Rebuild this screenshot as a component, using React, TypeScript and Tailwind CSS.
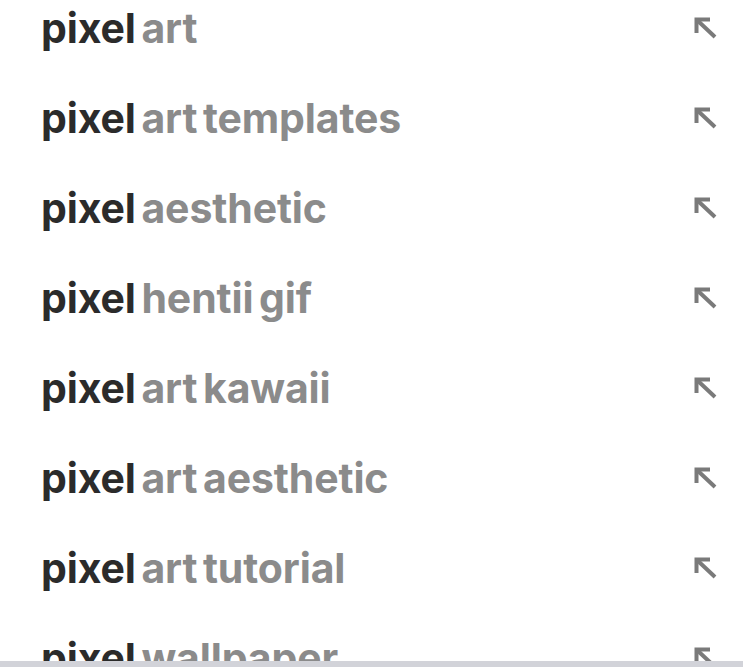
import { FC } from 'react'

const items: string[] = [
    'art',
    'art templates',
    'aesthetic',
    'hentii gif',
    'art kawaii',
    'art aesthetic',
    'art tutorial',
    'wallpaper',
];

const ArrowIcon: FC = () => (
    <svg width="24" height="22" viewBox="0 0 24 22" fill="none" className="text-[#7a7a7a]">
        <path d="M2.5 16V2.5H16" stroke="currentColor" strokeWidth="4" strokeLinecap="butt" strokeLinejoin="miter" />
        <path d="M3 3L21 20" stroke="currentColor" strokeWidth="4" />
    </svg>
);

const App: FC = () => {
    return (
        <div className="relative h-[667px] w-full overflow-hidden bg-white" style={{ fontFamily: 'Inter, "Liberation Sans", sans-serif' }}>
            <div className="flex flex-col mt-[-17px]">
                {items.map((item, i) => (
                    <div key={i} className="flex h-[90px] items-center justify-between pl-[41px] pr-[25px]">
                        <p className="text-[41px] leading-none font-bold tracking-[-0.003em] [word-spacing:-4px] whitespace-nowrap">
                            <span className="text-[#2b2b2b]">pixel </span>
                            <span className="text-[#8b8b8b]">{item}</span>
                        </p>
                        <ArrowIcon />
                    </div>
                ))}
            </div>
            <div className="absolute bottom-0 left-0 h-[6px] w-full bg-[#d2d3d9]"></div>
        </div>
    )
}

export default App;
